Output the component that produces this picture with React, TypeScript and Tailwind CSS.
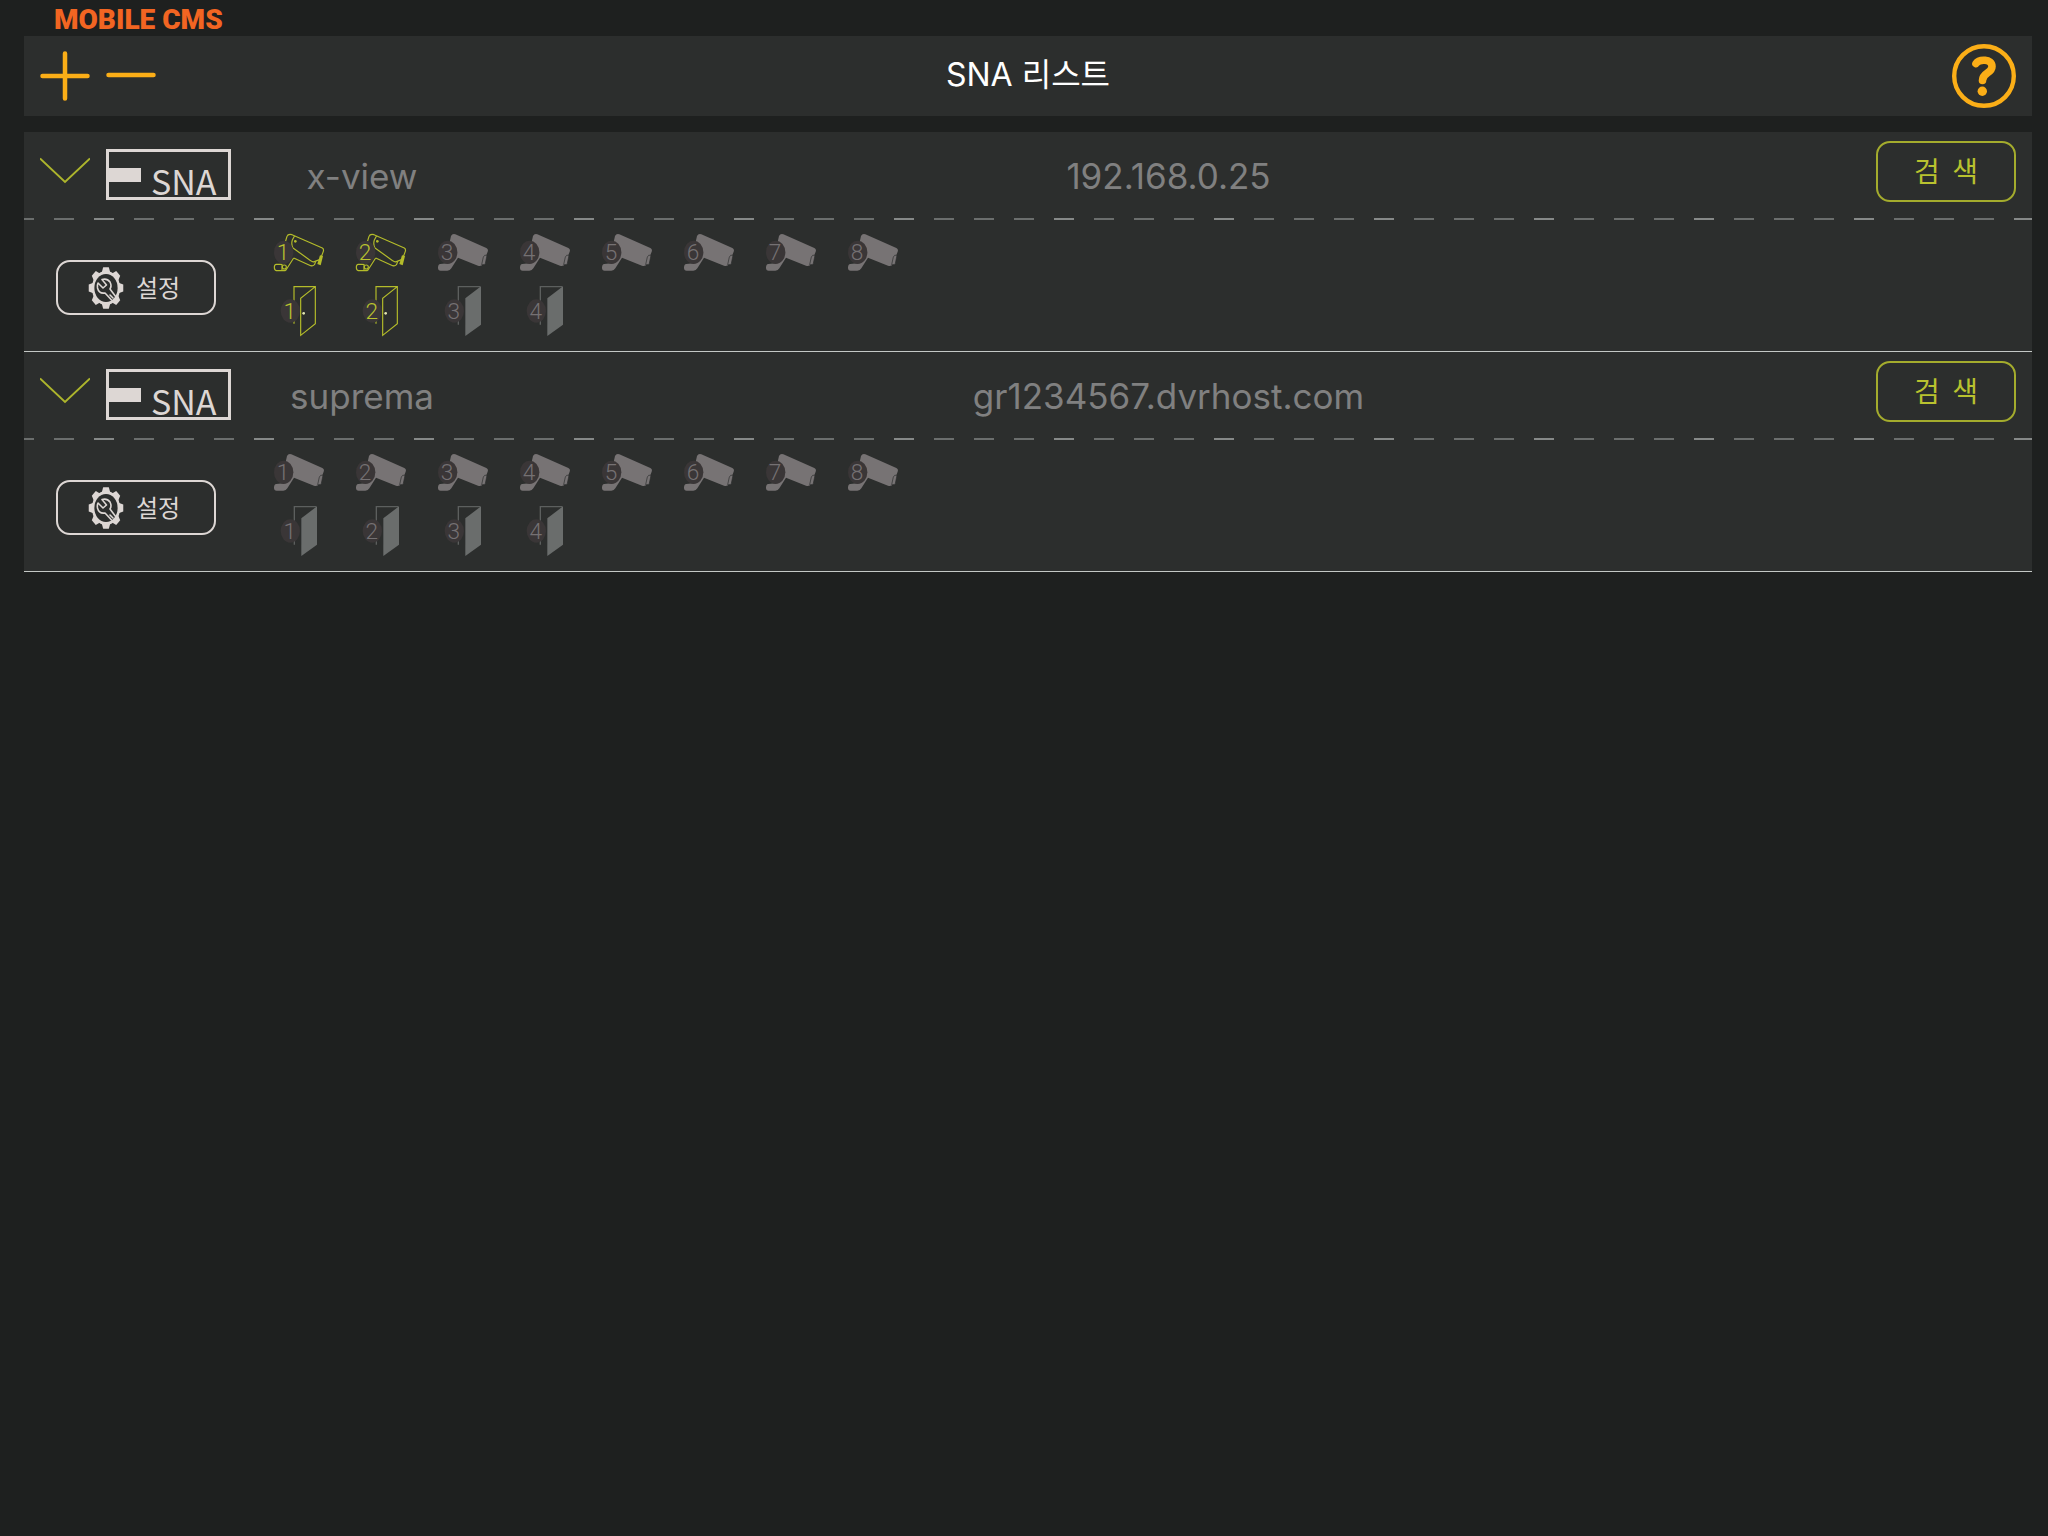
import type { ReactNode } from "react";

type Device = {
  name: string;
  host: string;
  cameras: boolean[];
  doors: boolean[];
};

const off = (count: number) => Array.from({ length: count }, () => false);

const devices: Device[] = [
  {
    name: "x-view",
    host: "192.168.0.25",
    cameras: [true, true, ...off(6)],
    doors: [true, true, ...off(2)],
  },
  {
    name: "suprema",
    host: "gr1234567.dvrhost.com",
    cameras: off(8),
    doors: off(4),
  },
];

function Badge({ x, y, on, children }: { x: number; y: number; on: boolean; children: ReactNode }) {
  return (
    <>
      <ellipse cx={x} cy={y} rx="29" ry="35" fill="#3a3637" />
      <text
        x={x - 2}
        y={y + 24}
        textAnchor="middle"
        fontSize="68"
        fill={on ? "#b9c22f" : "#757173"}
        className="font-['Roboto'] font-light"
      >
        {children}
      </text>
    </>
  );
}

function CameraIcon({ index, on }: { index: number; on: boolean }) {
  return (
    <svg viewBox="36 36 162 120" className="h-10 w-[54px]">
      {on ? (
        <>
          <g fill="none" stroke="#b4bc2a" strokeWidth="3.5" strokeLinejoin="round">
            <path d="M76 66 L81 49 Q84 41 96 44 L187 84 Q192 87 190 94 L181 118 L163 125 Q158 127 152 122 L99 84 Q93 72 97 60 L103 49" />
            <path d="M101 114 L152 137 Q161 139 164 133 L167 124" />
            <path d="M101 114 L78 150 Q76 152 70 152 L49 152 Q43 151 43 142 Q43 133 49 133 L66 133 V152" />
            <circle cx="73" cy="141" r="6" />
          </g>
          <circle cx="106" cy="64" r="4" fill="#b4bc2a" />
          <path d="M180 106 L189 108 L182 136 L172 132 Z" fill="#b4bc2a" />
        </>
      ) : (
        <g fill="#777374">
          <path d="M77 66 L81 48 Q85 40 94 43 L187 84 Q194 88 191 95 L177 131 Q173 140 162 137 L102 113 L82 145 Q78 152 70 152 L50 152 Q42 152 42 143 Q42 133 49 132 L70 130 Z" />
          <path
            d="M178 111 Q181 103 189 106 L184 130 Q182 136 173 134 Z"
            stroke="#2c2e2d"
            strokeWidth="2"
          />
        </g>
      )}
      <Badge x={71} y={97} on={on}>{index}</Badge>
    </svg>
  );
}

function DoorIcon({ index, on }: { index: number; on: boolean }) {
  return (
    <svg viewBox="36 192 162 162" className="h-[54px] w-[54px]">
      {on ? (
        <>
          <g fill="none" stroke="#b4bc2a" strokeWidth="3.5">
            <path d="M102 311 V200 H166 V311 L122 346 V235 L166 200" />
          </g>
          <circle cx="131" cy="280" r="4" fill="#e3e6b0" />
        </>
      ) : (
        <>
          <path d="M103 314 V200 H169" fill="none" stroke="#5c5f5e" strokeWidth="4" />
          <path d="M124 235 L171 199 V314 L124 348 Z" fill="#6a6d6c" />
        </>
      )}
      <Badge x={91} y={273} on={on}>{index}</Badge>
    </svg>
  );
}

function GearIcon() {
  return (
    <svg viewBox="0 0 36 42" className="h-[42px] w-9">
      <g transform="translate(18 21) scale(0.83 1)">
        {[0, 45, 90, 135].map((angle) => (
          <path
            key={angle}
            d="M-5 -16 L-3.4 -20.8 H3.4 L5 -16 V16 L3.4 20.8 H-3.4 L-5 16 Z"
            fill="#ddd7d4"
            transform={`rotate(${angle})`}
          />
        ))}
        <circle r="17" fill="#ddd7d4" />
        <circle r="14" fill="#2c2e2d" />
      </g>
      <path
        d="M14 12.5 Q19 11 22 15 Q24 19 22 22 L28 30 M23.5 33 L17 26 Q11 27 9.5 21 Q9 18 10 16 L15 21 L18.5 18 L14 12.5 M22 28 L25 31"
        fill="none"
        stroke="#ddd7d4"
        strokeWidth="1.6"
        strokeLinejoin="round"
        strokeLinecap="round"
      />
    </svg>
  );
}

// every fourth dash is a little brighter
function DashedRule() {
  return (
    <div className="h-[2px] bg-[linear-gradient(90deg,#6b6e6d_0_20px,transparent_20px_40px,#6b6e6d_40px_60px,transparent_60px_80px,#868988_80px_100px,transparent_100px_120px,#6b6e6d_120px_140px,transparent_140px_160px)] bg-[length:160px_2px] bg-[position:-10px_0]" />
  );
}

function DeviceRow({ device }: { device: Device }) {
  return (
    <li className="border-b border-[#c4c8c5] bg-[#2c2e2d]">
      <div className="flex h-[86px] items-start px-4">
        <button type="button" aria-label="접기" className="mt-6 mr-4">
          <svg viewBox="0 0 50 28" className="h-7 w-[50px]" fill="none" stroke="#adb52c" strokeWidth="2">
            <path d="M0 2.5 L25 26 L50 2.5" />
          </svg>
        </button>
        <div className="mt-[17px] flex h-[51px] w-[125px] items-center border-3 border-[#ddd7d4]">
          <span className="h-[14px] w-8 bg-[#ddd7d4]" />
          <span className="mt-3 ml-[10px] font-['Noto_Sans_CJK_KR',sans-serif] text-[34px] leading-8 text-[#ddd7d4]">
            SNA
          </span>
        </div>
        <span className="mt-[23px] ml-4 w-[230px] text-center text-[35px] leading-[42px] text-[#808080]">
          {device.name}
        </span>
        <span className="mt-[23px] mr-4 flex-1 text-center text-[35px] leading-[42px] text-[#808080]">
          {device.host}
        </span>
        <button
          type="button"
          className="mt-[9px] h-[61px] w-[140px] rounded-[14px] border-2 border-[#a4ac2d] pb-1 font-['Noto_Sans_CJK_KR',sans-serif] text-[28px] leading-9 whitespace-pre text-[#b9c22f]"
        >
          {"검  색"}
        </button>
      </div>
      <DashedRule />
      <div className="flex h-[131px] items-start pl-8">
        <button
          type="button"
          className="mt-10 mr-14 flex h-[55px] w-40 items-center justify-center gap-3 rounded-[14px] border-2 border-[#ddd7d4] pr-1 font-['Noto_Sans_CJK_KR',sans-serif] text-[24px] leading-9 text-[#ddd7d4]"
        >
          <GearIcon />
          <span className="pb-0.5">설정</span>
        </button>
        <div className="mt-3 flex flex-col gap-3">
          <div className="flex gap-7">
            {device.cameras.map((on, i) => (
              <CameraIcon key={i} index={i + 1} on={on} />
            ))}
          </div>
          <div className="flex gap-7">
            {device.doors.map((on, i) => (
              <DoorIcon key={i} index={i + 1} on={on} />
            ))}
          </div>
        </div>
      </div>
    </li>
  );
}

export default function App() {
  return (
    <div className="min-h-screen bg-[#1e201f] pr-4 pl-6 font-['Inter','Noto_Sans_CJK_KR',sans-serif]">
      <h1 className="flex h-9 items-center pt-1 pl-[30px] font-['Roboto'] text-[28px] leading-8 font-black text-[#f26522]">
        MOBILE CMS
      </h1>

      <header className="grid h-20 grid-cols-3 items-center bg-[#2c2e2d] px-4">
        <div className="flex gap-4">
          <button type="button" aria-label="추가">
            <svg viewBox="0 0 50 50" className="size-[50px]" stroke="#fbae17" strokeWidth="4.5" strokeLinecap="round">
              <path d="M25 2.5 V47.5 M2.5 25 H47.5" />
            </svg>
          </button>
          <button type="button" aria-label="삭제">
            <svg viewBox="0 0 50 50" className="size-[50px]" stroke="#fbae17" strokeWidth="4.5" strokeLinecap="round">
              <path d="M2.5 24 H47.5" />
            </svg>
          </button>
        </div>
        <h2 className="pb-0.5 text-center text-[32px] leading-10 text-white">SNA 리스트</h2>
        <button type="button" aria-label="도움말" className="justify-self-end">
          <svg viewBox="0 0 64 64" className="size-16" fill="none" stroke="#fbae17">
            <circle cx="32" cy="32" r="29.8" strokeWidth="4.4" />
            <path d="M24 19.5 C27 15 40 14.5 40 22.5 C40 29.5 30.5 28.5 30.5 36.5" strokeWidth="7.6" strokeLinecap="round" />
            <circle cx="30.3" cy="47.3" r="4.7" fill="#fbae17" stroke="none" />
          </svg>
        </button>
      </header>

      <ul className="mt-4">
        {devices.map((device) => (
          <DeviceRow key={device.name} device={device} />
        ))}
      </ul>
    </div>
  );
}
